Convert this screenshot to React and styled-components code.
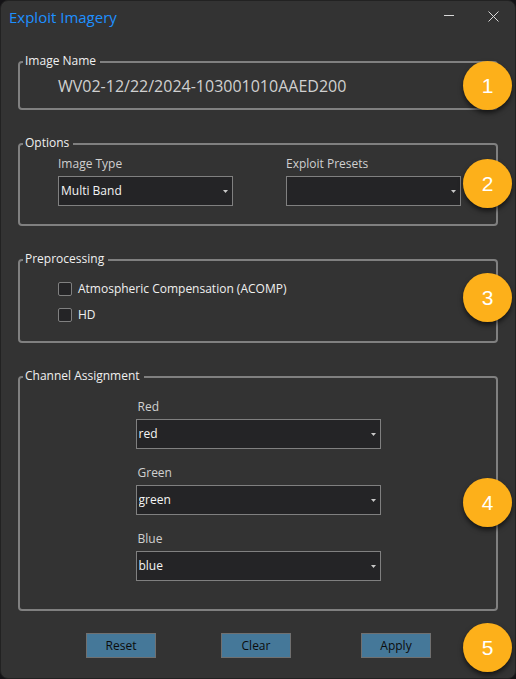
import React, { useState } from 'react';
import styled, { createGlobalStyle } from 'styled-components';

const GlobalStyle = createGlobalStyle`
  * {
    box-sizing: border-box;
  }
  body {
    margin: 0;
    background: #141316;
    font-family: "Open Sans", "Noto Sans", sans-serif;
    font-size: 12px;
    line-height: 16px;
    color: #d0d0d0;
  }
`;

const Dialog = styled.main`
  min-height: 100vh;
  padding: 0 18px 20px;
  background: #333333;
  border: 1px solid #222222;
  border-radius: 8px;
`;

const TitleBar = styled.header`
  display: flex;
  align-items: center;
  justify-content: space-between;
  height: 32px;
  margin: 0 -8px 21px -10px;
  h1 {
    margin: 0;
    font-size: 15px;
    font-weight: 400;
    line-height: 20px;
    color: #1e90ff;
  }
`;

const WindowButtons = styled.div`
  display: flex;
  gap: 20px;
  padding-bottom: 2px;
  button {
    width: 24px;
    height: 24px;
    padding: 0;
    border: 0;
    background: none;
    color: #d8d8d8;
  }
  svg {
    display: block;
    margin: auto;
  }
`;

const Section = styled.div`
  position: relative;
  margin: 0 -1px 26px;
  &:last-of-type {
    margin-bottom: 22px;
  }
`;

const Group = styled.fieldset`
  min-width: 0;
  margin: 0;
  padding: ${({ $padding }) => $padding};
  border: 2px solid #808080;
  border-radius: 4px;
  legend {
    margin-left: -35px;
    padding: 0 4px 2px 2px;
    line-height: 14px;
    color: #f0f0f0;
  }
`;

const Badge = styled.span`
  position: absolute;
  top: ${({ $top }) => $top}px;
  right: -14px;
  width: 49px;
  height: 49px;
  border-radius: 50%;
  background: #fdb01a;
  box-shadow: 0 3px 5px rgba(0, 0, 0, 0.6);
  font-family: "Liberation Sans", Arial, sans-serif;
  font-size: 21px;
  line-height: 49px;
  text-align: center;
  color: #ffffff;
`;

const ImageName = styled.p`
  margin: 0;
  font-size: 16px;
  line-height: 20px;
`;

const OptionsGrid = styled.div`
  display: grid;
  grid-template-columns: 1fr 1fr;
  gap: 53px;
`;

const ChannelList = styled.div`
  display: grid;
  gap: 16px;
  width: 245px;
  max-width: 100%;
  margin: 0 auto;
`;

const Field = styled.div`
  display: grid;
  gap: 4px;
  label {
    padding-left: ${({ $indent }) => ($indent ? 2 : 0)}px;
  }
`;

const SelectBox = styled.div`
  display: grid;
  align-items: center;
  select,
  svg {
    grid-area: 1 / 1;
  }
  select {
    appearance: none;
    width: 100%;
    height: 30px;
    padding: 0 20px 0 2px;
    border: 1px solid #808080;
    border-radius: 0;
    background: #242426;
    font: inherit;
    color: #f4f4f4;
  }
  svg {
    justify-self: end;
    margin-right: 5px;
    pointer-events: none;
  }
`;

const CheckRow = styled.label`
  display: flex;
  align-items: center;
  gap: 6px;
  height: 26px;
  color: #f0f0f0;
  input {
    appearance: none;
    width: 14px;
    height: 14px;
    margin: 0;
    border: 1px solid #808080;
    border-radius: 2px;
    background: #242426;
  }
  input:checked {
    background: #457899;
  }
`;

const Footer = styled.footer`
  position: relative;
  display: flex;
  justify-content: space-between;
  margin: 0 -1px;
  padding: 0 67px 0 68px;
`;

const ButtonPair = styled.div`
  display: flex;
  gap: 65px;
`;

const ActionButton = styled.button`
  width: 70px;
  height: 25px;
  padding: 0;
  border: 1px solid #707070;
  background: #457899;
  font: inherit;
  color: #0c0c0c;
`;

const Select = ({ id, label, options, indent }) => (
  <Field $indent={indent}>
    <label htmlFor={id}>{label}</label>
    <SelectBox>
      <select id={id} defaultValue={options[0]}>
        {options.map(option => <option key={option}>{option}</option>)}
      </select>
      <svg width="5" height="3" viewBox="0 0 5 3" aria-hidden="true">
        <path d="M0 0h5L2.5 3z" fill="#c8c8c8" />
      </svg>
    </SelectBox>
  </Field>
);

const Check = ({ label }) => {
  const [checked, setChecked] = useState(false);
  return (
    <CheckRow>
      <input type="checkbox" checked={checked} onChange={e => setChecked(e.target.checked)} />
      {label}
    </CheckRow>
  );
};

const App = () => (
  <>
    <GlobalStyle />
    <Dialog>
      <TitleBar>
        <h1>Exploit Imagery</h1>
        <WindowButtons>
          <button type="button" aria-label="Minimize">
            <svg width="10" height="10" viewBox="0 0 10 10">
              <path d="M0 4.5h10" stroke="currentColor" />
            </svg>
          </button>
          <button type="button" aria-label="Close">
            <svg width="11" height="11" viewBox="0 0 11 11">
              <path d="M.5.5l10 10M10.5.5l-10 10" stroke="currentColor" />
            </svg>
          </button>
        </WindowButtons>
      </TitleBar>

      <Section>
        <Group $padding="6px 35px 12px 38px">
          <legend>Image Name</legend>
          <ImageName>WV02-12/22/2024-103001010AAED200</ImageName>
        </Group>
        <Badge $top={7}>1</Badge>
      </Section>

      <Section>
        <Group $padding="4px 35px 18px 38px">
          <legend>Options</legend>
          <OptionsGrid>
            <Select id="type" label="Image Type" options={['Multi Band', 'Panchromatic']} />
            <Select id="presets" label="Exploit Presets" options={['']} />
          </OptionsGrid>
        </Group>
        <Badge $top={23}>2</Badge>
      </Section>

      <Section>
        <Group $padding="8px 35px 13px 38px">
          <legend>Preprocessing</legend>
          <Check label="Atmospheric Compensation (ACOMP)" />
          <Check label="HD" />
        </Group>
        <Badge $top={21}>3</Badge>
      </Section>

      <Section>
        <Group $padding="14px 38px 28px">
          <legend>Channel Assignment</legend>
          <ChannelList>
            <Select id="red" label="Red" options={['red', 'green', 'blue']} indent />
            <Select id="green" label="Green" options={['green', 'red', 'blue']} indent />
            <Select id="blue" label="Blue" options={['blue', 'red', 'green']} indent />
          </ChannelList>
        </Group>
        <Badge $top={109}>4</Badge>
      </Section>

      <Footer>
        <ButtonPair>
          <ActionButton type="reset">Reset</ActionButton>
          <ActionButton type="button">Clear</ActionButton>
        </ButtonPair>
        <ActionButton type="button">Apply</ActionButton>
        <Badge $top={-10}>5</Badge>
      </Footer>
    </Dialog>
  </>
);

export default App;
